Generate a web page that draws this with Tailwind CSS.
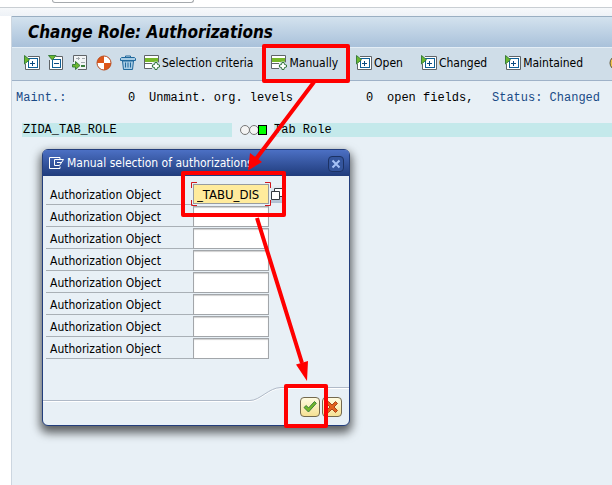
<!DOCTYPE html>
<html lang="en">
<head>
<meta charset="utf-8">
<title>Change Role: Authorizations</title>
<script src="https://cdn.jsdelivr.net/npm/@tailwindcss/browser@4"></script>
</head>
<body class="relative h-screen overflow-hidden bg-white pl-3 text-xs text-black font-['DejaVu_Sans_Condensed','DejaVu_Sans',sans-serif]">
<svg class="hidden">
  <symbol id="expand" viewBox="0 0 16 16">
    <path d="M4 1.500H15.500V14.500H1.500V9" fill="#fff" stroke="#5f6468"/>
    <path d="M4 3h10v10H4z" fill="#0f5f96"/><path d="M5 4h8v8H5z" fill="#fff"/>
    <path d="M6 8.500h5M8.500 6v5" stroke="#0a4a80"/>
    <path d="M.5 .5V9L5.500 4.700z" fill="#6cb82e" stroke="#3a7f3c"/>
  </symbol>
  <symbol id="add-row" viewBox="0 0 16 16">
    <path d="M8 13.500H.5V.5H14.500V8" fill="#fff" stroke="#5f6468"/>
    <path d="M1 3h13v4H1z" fill="#76b82a"/>
    <path d="M1 8.500h7" stroke="#5f6468"/>
    <circle cx="12" cy="11" r="4.500" fill="#cfdde8"/>
    <path d="M11 7.500h2l.5 2 2 .5v2l-2 .5-.5 2h-2l-.5-2-2-.5v-2l2-.5z" fill="#fff" stroke="#34763d"/>
  </symbol>
</svg>

<main class="-ml-px mt-4 flex min-h-screen flex-col border-l border-[#ccd6e0] bg-[#e8f0f6]">
  <header class="flex h-[31px] items-center border-t border-[#9aafc2] bg-linear-to-b from-[#d3e2ee] to-[#a9c1da] pl-4">
    <h1 class="whitespace-nowrap text-[17px] leading-5 font-bold italic">Change Role: Authorizations</h1>
  </header>
  <nav class="flex h-[34px] items-center gap-2 overflow-hidden border-t border-b border-t-[#e4eef6] border-b-[#9fb2c8] bg-[#cfdde8] pb-0.5 pl-3 whitespace-nowrap" aria-label="Role tools">
    <button aria-label="Expand" class="shrink-0"><svg class="size-4"><use href="#expand"/></svg></button>
    <button aria-label="Collapse" class="shrink-0"><svg class="size-4" viewBox="0 0 16 16">
      <path d="M8 1.500H14.500V14.500H1.500V5" fill="#fff" stroke="#5f6468"/>
      <path d="M4 4h9v9H4z" fill="#0f5f96"/><path d="M5 5h7v7H5z" fill="#fff"/>
      <path d="M6 8.500h5" stroke="#0a4a80"/><path d="M.5 .5H8L4.300 5z" fill="#6cb82e" stroke="#3a7f3c"/></svg></button>
    <button aria-label="Position" class="shrink-0"><svg class="size-4" viewBox="0 0 16 16">
      <path d="M1.500 7V.5H14.500V14.500H6" fill="#fff" stroke="#5f6468"/><path d="M2 1h12v13H6V8H2z" fill="#f2f5f6"/>
      <path d="M4 3.500h4M10 3.500h3M9 7.500h4M9 11.500h4M6.500 2v3" stroke="#a3aaae"/><path d="M9 10h4v2H9z" fill="#3a7f3c"/>
      <path d="M.5 9.500h3V6.500L8 10.500l-4.500 4v-2.500H.5z" fill="#6cb82e" stroke="#3a7f3c"/></svg></button>
    <button aria-label="Generate" class="shrink-0"><svg class="size-4" viewBox="0 0 16 16">
      <circle cx="8" cy="8" r="7" fill="#fff"/><path d="M8 8V1A7 7 0 0 0 1 8zM8 8v7A7 7 0 0 0 15 8z" fill="#dd5518"/>
      <circle cx="8" cy="8" r="7" fill="none" stroke="#b94a1c"/></svg></button>
    <button aria-label="Delete" class="shrink-0"><svg class="size-4" viewBox="0 0 16 16" fill="none" stroke="#20689c">
      <path d="M5.500 3V1h5v2"/><path d="M.5 5.500v-2l1-1h13l1 1v2z" fill="#a8cce4"/>
      <path d="M2.500 6l1 8.500h9l1-8.500z" fill="#a8cce4"/><path d="M5.500 7.500v5M8 7.500v5M10.500 7.500v5"/></svg></button>
    <div class="flex gap-[18px]">
      <button class="flex shrink-0 items-center gap-0.5"><svg class="size-4"><use href="#add-row"/></svg>Selection criteria</button>
      <button class="flex shrink-0 items-center gap-0.5"><svg class="size-4"><use href="#add-row"/></svg>Manually</button>
      <button class="flex shrink-0 items-center gap-0.5"><svg class="size-4"><use href="#expand"/></svg>Open</button>
      <button class="flex shrink-0 items-center gap-0.5"><svg class="size-4"><use href="#expand"/></svg>Changed</button>
      <button class="flex shrink-0 items-center gap-0.5"><svg class="size-4"><use href="#expand"/></svg>Maintained</button>
      <button aria-label="More" class="ml-2 shrink-0"><svg class="size-4" viewBox="0 0 16 16"><circle cx="8" cy="8" r="7" fill="#f0c54a" stroke="#5c5236"/></svg></button>
    </div>
  </nav>
  <section class="font-['Liberation_Mono',monospace] leading-[14px] whitespace-nowrap">
    <div class="mt-2.5 flex pl-1">
      <span class="w-28 text-[#194a86]">Maint.:</span><span class="w-[21px]">0</span>
      <span class="w-[217px]">Unmaint. org. levels</span><span class="w-[21px]">0</span>
      <span class="w-[105px]">open fields,</span><span class="text-[#194a86]">Status: Changed</span>
    </div>
    <div class="mt-[18px] flex items-center pl-2.5">
      <span class="w-[210px] bg-[#c4e9eb] pl-px">ZIDA_TAB_ROLE</span>
      <svg class="ml-2 mr-[7px] h-3 w-[27px]" viewBox="0 0 27 12" role="img" aria-label="Green">
        <circle cx="5" cy="6" r="4.500" fill="#f4f4f4" stroke="#777"/><circle cx="14" cy="6" r="4.500" fill="#f4f4f4" stroke="#777"/>
        <rect x="18" y="1" width="9" height="10" fill="#000"/><rect x="19" y="2" width="7" height="8" fill="#0f0"/></svg>
      <span class="grow bg-[#c4e9eb]">Tab Role</span>
    </div>
  </section>
</main>

<div class="absolute inset-x-0 top-0 h-4 bg-linear-to-b from-white to-[#eef2f7]">
  <div class="h-2 border-b border-[#c9ced3] bg-white pl-[52px]"><div class="h-[3px] w-[142px] rounded-b-sm border border-t-0 border-[#a5a9ad]"></div></div>
</div>

<section role="dialog" aria-labelledby="dialog-title" class="absolute left-[42px] top-[149px] w-[308px] rounded-md border border-[#233e7c] bg-[#e8f0f6] shadow-[0_5px_10px_2px_rgba(0,0,0,0.6)]">
  <header class="flex h-[26px] items-center gap-0.5 rounded-t bg-linear-to-b from-[#4c70c4] to-[#203c7c] pl-1.5 pr-[5px] text-white">
    <svg class="h-3 w-4 shrink-0" viewBox="0 0 16 12" fill="none" stroke="#fff"><path d="M11 2.500V.5H.5v11H11V9.500M14.500 2.500H5.500V8.500H10.500zM8 5.500h4"/></svg>
    <h2 id="dialog-title" class="grow whitespace-nowrap">Manual selection of authorizations</h2>
    <button aria-label="Close" class="mt-0.5 flex size-4 items-center justify-center rounded-sm border border-[#1c3264] bg-[#34559d]"><svg class="size-2.5" viewBox="0 0 10 10"><path d="M1.500 1.500l7 7M8.500 1.500l-7 7" stroke="#a6c2f6" stroke-width="2"/></svg></button>
  </header>
  <form class="flex flex-col gap-px pt-2 pl-[3px]">
    <div class="flex h-[21px]"><label for="o1" class="w-[147px] border-b border-[#a9b0b6] pl-1 leading-[23px]">Authorization Object</label><div class="relative"><input id="o1" value="_TABU_DIS" class="block h-5 w-[76px] border border-[#979ca0] bg-[#ffeb9c] pl-[3px] text-[13px]">
      <svg class="absolute -left-0.5 -top-0.5 h-6 w-20" viewBox="0 0 80 24" fill="none" stroke="#d0181c"><path d="M.5 6V.5H6M74 .5h5.500V6M.5 18v5.500H6M74 23.500h5.500V18"/></svg></div>
      <button type="button" aria-label="Choose values" class="ml-0.5 flex h-[19px] w-3.5 items-center bg-linear-to-b from-[#eef3f7] to-[#aebfd2]"><svg class="size-3 shrink-0" viewBox="0 0 12 12" fill="#fff" stroke="#343a40"><path d="M3.500.5h8v8h-8z"/><path d="M.5 3.500h8v8h-8z"/></svg></button></div>
    <div class="flex h-[21px]"><label for="o2" class="w-[147px] border-b border-[#a9b0b6] pl-1 leading-[23px]">Authorization Object</label><input id="o2" class="w-[76px] border border-[#a2a6aa] bg-white shadow-[inset_0_1px_1px_#d0d0d0]"></div>
    <div class="flex h-[21px]"><label for="o3" class="w-[147px] border-b border-[#a9b0b6] pl-1 leading-[23px]">Authorization Object</label><input id="o3" class="w-[76px] border border-[#a2a6aa] bg-white shadow-[inset_0_1px_1px_#d0d0d0]"></div>
    <div class="flex h-[21px]"><label for="o4" class="w-[147px] border-b border-[#a9b0b6] pl-1 leading-[23px]">Authorization Object</label><input id="o4" class="w-[76px] border border-[#a2a6aa] bg-white shadow-[inset_0_1px_1px_#d0d0d0]"></div>
    <div class="flex h-[21px]"><label for="o5" class="w-[147px] border-b border-[#a9b0b6] pl-1 leading-[23px]">Authorization Object</label><input id="o5" class="w-[76px] border border-[#a2a6aa] bg-white shadow-[inset_0_1px_1px_#d0d0d0]"></div>
    <div class="flex h-[21px]"><label for="o6" class="w-[147px] border-b border-[#a9b0b6] pl-1 leading-[23px]">Authorization Object</label><input id="o6" class="w-[76px] border border-[#a2a6aa] bg-white shadow-[inset_0_1px_1px_#d0d0d0]"></div>
    <div class="flex h-[21px]"><label for="o7" class="w-[147px] border-b border-[#a9b0b6] pl-1 leading-[23px]">Authorization Object</label><input id="o7" class="w-[76px] border border-[#a2a6aa] bg-white shadow-[inset_0_1px_1px_#d0d0d0]"></div>
    <div class="flex h-[21px]"><label for="o8" class="w-[147px] border-b border-[#a9b0b6] pl-1 leading-[23px]">Authorization Object</label><input id="o8" class="w-[76px] border border-[#a2a6aa] bg-white shadow-[inset_0_1px_1px_#d0d0d0]"></div>
  </form>
  <footer class="relative mt-7 flex h-[38px] items-end justify-end gap-0.5 pr-[7px] pb-2">
    <svg class="absolute left-0 top-0 h-4 w-full" viewBox="0 0 306 16" preserveAspectRatio="none" fill="none"><path d="M0 14.500H207C217 14.500 226 1.500 238 1.500H306" stroke="#fff"/><path d="M0 13.500H207C217 13.500 226 .5 238 .5H306" stroke="#b0bac8"/></svg>
    <button aria-label="Continue" class="relative flex size-5 items-center justify-center rounded-sm border border-[#73694e] bg-linear-to-b from-[#fffbe0] to-[#f6e194]"><svg class="size-3.5" viewBox="0 0 14 14"><path d="M1 7.500L3.300 5.500 5.500 8 11.500 1.500 13.300 3.300 5.500 12z" fill="#76b82a" stroke="#3a7f3c"/></svg></button>
    <button aria-label="Cancel" class="relative flex size-5 items-center justify-center rounded-sm border border-[#73694e] bg-linear-to-b from-[#fffbe0] to-[#f6e194]"><svg class="size-3.5" viewBox="0 0 14 14"><path d="M1.500 3.500l2-2L7 5l3.500-3.500 2 2L9 7l3.500 3.500-2 2L7 9l-3.500 3.500-2-2L5 7z" fill="#e2601c" stroke="#a5431a"/></svg></button>
  </footer>
</section>

<svg class="pointer-events-none absolute left-0 top-0 h-[485px] w-[612px]" viewBox="0 0 612 485" fill="none" stroke="#f00" stroke-width="4" stroke-linejoin="round" aria-hidden="true">
  <rect x="264" y="46" width="84" height="35"/><rect x="183" y="173" width="101" height="42"/><rect x="286" y="386" width="40" height="40"/>
  <path d="M314 82L256 159M257 218L302 363"/>
  <path d="M248 170.500L250 153 262 162zM307 381L296 364.500 308 361z" fill="#f00" stroke="none"/>
</svg>
</body>
</html>
